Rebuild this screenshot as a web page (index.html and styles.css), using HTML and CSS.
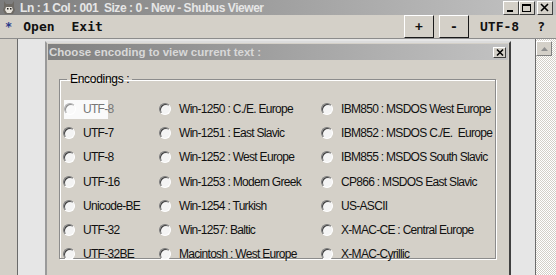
FILE: index.html
```html
<!DOCTYPE html>
<html lang="en">
  <head>
    <meta charset="UTF-8" />
    <title>Shubus Viewer</title>
    <link rel="stylesheet" href="styles.css">
  </head>
  <body>
    <div class="app">
      <div class="titlebar">
        <svg class="app-icon" width="14" height="15" viewBox="0 0 14 15">
          <path d="M2 1 L4 4 L10 4 L12 1 L12 7 L13 10 L11 14 L3 14 L1 10 L2 7 Z" fill="#6e6a64"/>
          <path d="M4 7 L10 7 L11 10 L9 13 L5 13 L3 10 Z" fill="#e8e4dc"/>
          <rect x="5" y="8" width="1.5" height="1.5" fill="#222"/>
          <rect x="8" y="8" width="1.5" height="1.5" fill="#222"/>
        </svg>
        <span class="title">Ln : 1 Col : 001 &nbsp;Size : 0 - New - Shubus Viewer</span>
        <div class="win-btns">
          <span class="wbtn"><svg width="12" height="10" viewBox="0 0 12 10"><rect x="2" y="7" width="6" height="2" fill="#000"/></svg></span>
          <span class="wbtn"><svg width="12" height="10" viewBox="0 0 12 10"><rect x="1.5" y="1.5" width="8" height="7" fill="none" stroke="#000"/><rect x="1" y="1" width="9" height="2" fill="#000"/></svg></span>
          <span class="wbtn close"><svg width="12" height="10" viewBox="0 0 12 10"><path d="M2 1 L9 8 M9 1 L2 8" stroke="#000" stroke-width="1.6"/></svg></span>
        </div>
      </div>
      <div class="toolbar">
        <span class="star">*</span>
        <span class="menu">Open</span>
        <span class="menu exit">Exit</span>
        <span class="spacer"></span>
        <button class="tbtn">+</button>
        <button class="tbtn">-</button>
        <span class="menu enc">UTF-8</span>
        <span class="menu help">?</span>
      </div>
      <div class="main">
        <div class="gutter"></div>
        <div class="editor">
          <div class="dialog">
            <div class="dlg-title">
              <span>Choose encoding to view current text :</span>
              <span class="dlg-close"><svg width="8" height="7" viewBox="0 0 8 7"><path d="M1 0.5 L7 6.5 M7 0.5 L1 6.5" stroke="#000" stroke-width="1.5"/></svg></span>
            </div>
            <div class="dlg-body">
              <fieldset class="group">
                <legend>Encodings :</legend>
                <div class="options">
                  <label class="opt focus"><span class="radio"></span>UTF-8</label>
                  <label class="opt"><span class="radio"></span>Win-1250 : C./E. Europe</label>
                  <label class="opt"><span class="radio"></span>IBM850 : MSDOS West Europe</label>
                  <label class="opt"><span class="radio"></span>UTF-7</label>
                  <label class="opt"><span class="radio"></span>Win-1251 : East Slavic</label>
                  <label class="opt"><span class="radio"></span>IBM852 : MSDOS C./E.&nbsp; Europe</label>
                  <label class="opt"><span class="radio"></span>UTF-8</label>
                  <label class="opt"><span class="radio"></span>Win-1252 : West Europe</label>
                  <label class="opt"><span class="radio"></span>IBM855 : MSDOS South Slavic</label>
                  <label class="opt"><span class="radio"></span>UTF-16</label>
                  <label class="opt"><span class="radio"></span>Win-1253 : Modern Greek</label>
                  <label class="opt"><span class="radio"></span>CP866 : MSDOS East Slavic</label>
                  <label class="opt"><span class="radio"></span>Unicode-BE</label>
                  <label class="opt"><span class="radio"></span>Win-1254 : Turkish</label>
                  <label class="opt"><span class="radio"></span>US-ASCII</label>
                  <label class="opt"><span class="radio"></span>UTF-32</label>
                  <label class="opt"><span class="radio"></span>Win-1257: Baltic</label>
                  <label class="opt"><span class="radio"></span>X-MAC-CE : Central Europe</label>
                  <label class="opt"><span class="radio"></span>UTF-32BE</label>
                  <label class="opt"><span class="radio"></span>Macintosh : West Europe</label>
                  <label class="opt"><span class="radio"></span>X-MAC-Cyrillic</label>
                </div>
              </fieldset>
            </div>
          </div>
        </div>
        <div class="scrollbar">
          <span class="sb-btn"><svg width="7" height="4" viewBox="0 0 7 4"><path d="M0 4 L3.5 0 L7 4 Z" fill="#909090"/></svg></span>
        </div>
      </div>
    </div>
  </body>
</html>
```
FILE: styles.css
```css
body {
  margin: 0;
  width: 556px;
  height: 275px;
  overflow: hidden;
  background: #d4d0c8;
  font-family: "Liberation Sans", Arial, sans-serif;
}
.app {
  display: flex;
  flex-direction: column;
  height: 275px;
}
.titlebar {
  height: 17px;
  display: flex;
  align-items: center;
  background: linear-gradient(to right, #7c7c7c, #c4c4c4);
}
.app-icon {
  margin: 0 4px 0 2px;
}
.title {
  color: #e6e6e6;
  font-size: 12px;
  font-weight: bold;
  letter-spacing: -0.45px;
  white-space: nowrap;
}
.win-btns {
  margin-left: auto;
  margin-right: 3px;
  display: flex;
}
.wbtn {
  width: 16px;
  height: 14px;
  display: flex;
  align-items: center;
  justify-content: center;
  box-sizing: border-box;
  background: #d4d0c8;
  border: 1px solid;
  border-color: #fff #404040 #404040 #fff;
}
.wbtn.close {
  margin-left: 2px;
}
.toolbar {
  height: 25px;
  display: flex;
  align-items: center;
  border-bottom: 1px solid #8c8c8c;
  font-family: "DejaVu Sans Mono", "Liberation Mono", monospace;
  font-weight: bold;
  font-size: 13px;
}
.star {
  color: #2a3a8a;
  margin-left: 5px;
  font-size: 12px;
}
.menu {
  color: #111;
}
.star + .menu {
  margin-left: 11px;
}
.exit {
  margin-left: 17px;
}
.spacer {
  flex: 1;
}
.tbtn {
  width: 30px;
  height: 23px;
  margin-right: 5px;
  padding: 0;
  font: bold 13px "DejaVu Sans Mono", monospace;
  color: #111;
  background: #d4d0c8;
  border: 1px solid;
  border-color: #fff #1a1a1a #1a1a1a #fff;
}
.tbtn:first-of-type {
  margin-left: 2px;
}
.enc {
  margin-left: 6px;
}
.help {
  margin: 0 11px 0 18px;
}
.main {
  flex: 1;
  display: flex;
}
.gutter {
  width: 17px;
  border-right: 1px solid #6a6a6a;
}
.editor {
  flex: 1;
  background: #e6e6e6;
  padding: 2px 0 0 27px;
  border-right: 1px solid #6a6a6a;
}
.dialog {
  width: 466px;
  height: 240px;
  box-sizing: border-box;
  background: #d4d0c8;
  border: 2px solid;
  border-color: #dcdcdc #404040 #404040 #9a9a9a;
}
.dlg-title {
  height: 16px;
  margin: 1px 1px 0 1px;
  display: flex;
  align-items: center;
  padding-left: 1px;
  background: linear-gradient(to right, #808080, #c2c2c2);
  color: #d8d8d8;
  font-size: 11.5px;
  font-weight: bold;
}
.dlg-close {
  margin-left: auto;
  margin-right: 2px;
  width: 13px;
  height: 11px;
  box-sizing: border-box;
  display: flex;
  align-items: center;
  justify-content: center;
  background: #d4d0c8;
  border: 1px solid;
  border-color: #fff #404040 #404040 #fff;
}
.dlg-body {
  padding: 12px 13px 0 12px;
}
.group {
  margin: 0;
  padding: 0 0 0 3px;
  height: 187px;
  box-sizing: border-box;
  border: 1px solid #8c8c8c;
  box-shadow: inset 1px 1px #fff, 1px 1px #fff;
}
.group legend {
  margin-left: 4px;
  padding: 0 3px;
  font-size: 12px;
  letter-spacing: -0.3px;
  color: #000;
}
.options {
  display: grid;
  grid-template-columns: 96px 162px 1fr;
  grid-auto-rows: 24.2px;
  padding-top: 11px;
}
.opt {
  display: flex;
  align-items: center;
  font-size: 12px;
  letter-spacing: -0.7px;
  color: #111;
  white-space: nowrap;
}
.opt.focus {
  align-self: center;
  width: 44px;
  height: 19px;
  margin-left: 1px;
  background: #fafafa;
  color: #777;
}
.opt.focus .radio {
  margin-right: 7px;
  background: #fafafa;
  border-color: #b0b0b0 #fff #fff #b0b0b0;
  box-shadow: inset 1px 1px #909090;
}
.radio {
  flex-shrink: 0;
  width: 12px;
  height: 12px;
  box-sizing: border-box;
  margin-right: 8px;
  border-radius: 50%;
  background: #f4f4f4;
  border: 1px solid;
  border-color: #7a7a7a #fff #fff #7a7a7a;
  box-shadow: inset 1px 1px #404040;
}
.scrollbar {
  width: 20px;
  background-color: #eeeeee;
  background-image: repeating-conic-gradient(#d4d0c8 0 25%, #ffffff 0 50%);
  background-size: 2px 2px;
}
.sb-btn {
  width: 16px;
  height: 15px;
  margin-top: 2px;
  box-sizing: border-box;
  display: flex;
  align-items: center;
  justify-content: center;
  background: #d4d0c8;
  border: 1px solid;
  border-color: #fff #808080 #808080 #fff;
}
```
